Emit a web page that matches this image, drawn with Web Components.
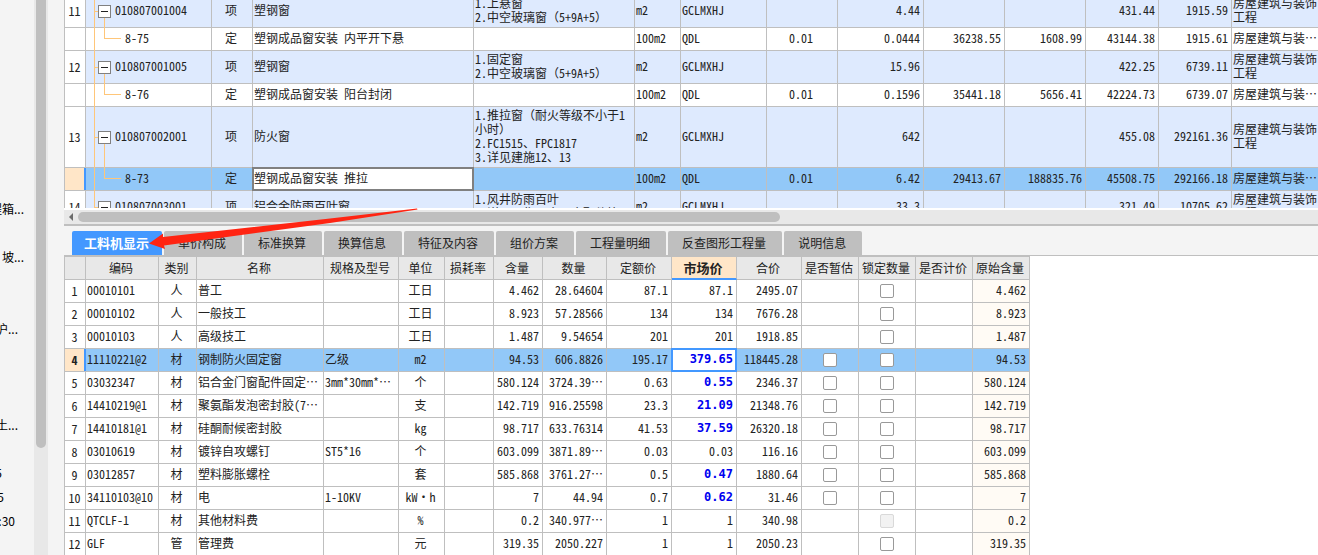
<!DOCTYPE html>
<html lang="zh-CN">
<head>
<meta charset="utf-8">
<title>工料机显示</title>
<style>
html, body { margin: 0; height: 100%; }
body { overflow: hidden; background: #fff; }
</style>
</head>
<body>
<budget-app></budget-app>
<script>
const define = (name, html) => customElements.define(name, class extends HTMLElement {
  constructor() {
    super();
    const t = document.createElement('template');
    t.innerHTML = html;
    this.attachShadow({ mode: 'open' }).append(t.content.cloneNode(true));
  }
});

const gridCss = `
:host { display: block; overflow: hidden; background: #fff; }
table { table-layout: fixed; width: 0; border-collapse: separate; border-spacing: 0; border-left: 1px solid #bfbfbf; }
th, td { box-sizing: border-box; height: 23px; padding: 0 0 2px 1px; border: 0 solid #bfbfbf; border-width: 0 1px 1px 0;
  font-weight: normal; white-space: nowrap; overflow: hidden; text-align: left; line-height: 14px; position: relative; }
.c { text-align: center; padding: 0 2px 2px 0; }
.r { text-align: right; padding: 0 3px 2px 0; }
.no { text-align: center; padding: 0 1px 0 0; background: #fff; }
.sel td { background: #92c8f8; }
.sel .no { background: #ffe6c8; font-weight: bold; }
.sel .no::after { content: ""; position: absolute; inset: 0 -1px 0 auto; width: 2px; background: #4398ff; }
.sel td.focus, .sel .no { overflow: visible; }
.sel td.focus { background: #fff; }
td.focus::after { content: ""; position: absolute; inset: -1px; border: 2px solid #808080; }
`;
const cols = w => '<colgroup>' + w.map(x => `<col style="width:${x}px">`).join('') + '</colgroup>';
const total = w => w.reduce((a, b) => a + b, 1);

/* upper grid: list items and their quota lines */
define('tree-node', `<style>
:host { display: block; position: relative; height: 100%; }
.in { display: flex; align-items: center; height: 100%; box-sizing: border-box; padding-left: 12px; gap: 4px; }
:host([child]) .in { padding-left: 39px; }
.label { padding-bottom: 2px; }
:host::before { content: ""; position: absolute; left: 8px; top: 0; bottom: -1px; width: 1px; background: #ffc679; }
:host([child]) .in::before { content: ""; position: absolute; left: 18px; top: 0; bottom: 50%; width: 16px; border: solid #ffc679; border-width: 0 0 1px 1px; }
:host(:not([child])) .in::before { content: ""; position: absolute; left: 18px; top: 50%; bottom: -1px; width: 1px; background: #ffc679; }
:host(:not([child])) .in::after { content: ""; position: absolute; left: 8px; top: 50%; height: 1px; width: 4px; background: #ffc679; }
button { position: relative; width: 13px; height: 13px; flex: none; padding: 0; border: 1px solid #808080; border-radius: 0; background: #fff; }
button::after { content: ""; position: absolute; left: 2px; right: 2px; top: 5px; height: 1px; background: #222; }
:host([child]) button { display: none; }
</style><div class="in"><button aria-label="折叠"></button><div class="label"><slot></slot></div></div>`);

const W1 = [21, 126, 41, 221, 161, 46, 86, 71, 86, 81, 81, 73, 73, 90];
const P2 = '房屋建筑与装饰<br>工程', P1 = '房屋建筑与装…';
const R1 = [
  [33, '11', '010807001004', '项', '塑钢窗', '1.上悬窗<br>2.中空玻璃窗（5+9A+5）', 'm2', 'GCLMXHJ', '', '4.44', '', '', '431.44', '1915.59', P2],
  [23, '', '8-75', '定', '塑钢成品窗安装 内平开下悬', '', '100m2', 'QDL', '0.01', '0.0444', '36238.55', '1608.99', '43144.38', '1915.61', P1],
  [33, '12', '010807001005', '项', '塑钢窗', '1.固定窗<br>2.中空玻璃窗（5+9A+5）', 'm2', 'GCLMXHJ', '', '15.96', '', '', '422.25', '6739.11', P2],
  [23, '', '8-76', '定', '塑钢成品窗安装 阳台封闭', '', '100m2', 'QDL', '0.01', '0.1596', '35441.18', '5656.41', '42224.73', '6739.07', P1],
  [61, '13', '010807002001', '项', '防火窗', '1.推拉窗（耐火等级不小于1<br>小时）<br>2.FC1515、FPC1817<br>3.详见建施12、13', 'm2', 'GCLMXHJ', '', '642', '', '', '455.08', '292161.36', P2],
  [23, '', '8-73', '定', '塑钢成品窗安装 推拉', '', '100m2', 'QDL', '0.01', '6.42', '29413.67', '188835.76', '45508.75', '292166.18', P1],
  [33, '14', '010807003001', '项', '铝合金防雨百叶窗', '1.风井防雨百叶<br>2.详见图集、含五金配件等', 'm2', 'GCLMXHJ', '', '33.3', '', '', '321.49', '10705.62', P2]
];
define('item-grid', `<style>${gridCss}
table { margin-top: -5px; }
.item td { background: #deeafe; }
.item .no { background: #fff; }
.tree { padding: 0; overflow: visible; }
</style><table style="width:${total(W1)}px">${cols(W1)}<tbody>${R1.map(([h, ...c]) => {
  const child = c[0] === '', sel = c[1] === '8-73';
  return `<tr class="${child ? '' : 'item'} ${sel ? 'sel' : ''}">` + c.map((t, i) => {
    const k = i === 0 ? 'no' : i === 1 ? 'tree' : i === 2 || i === 7 ? 'c' : i > 7 && i < 13 ? 'r' : sel && i === 3 ? 'focus' : '';
    const v = i === 1 ? `<tree-node ${child ? 'child' : ''} style="height:${h - 1}px">${t}</tree-node>` : t;
    return `<td class="${k}" style="height:${h}px">${v}</td>`;
  }).join('') + '</tr>';
}).join('')}</tbody></table>`);

/* lower grid: labour, material and machine lines */
const W2 = [21, 73, 38, 127, 75, 46, 49, 49, 64, 65, 65, 65, 57, 57, 57, 57];
const H2 = ['', '编码', '类别', '名称', '规格及型号', '单位', '损耗率', '含量', '数量', '定额价', '市场价', '合价', '是否暂估', '锁定数量', '是否计价', '原始含量'];
const R2 = [
  ['00010101', '人', '普工', '', '工日', '4.462', '28.64604', '87.1', '87.1', '2495.07', '', 'o', '4.462'],
  ['00010102', '人', '一般技工', '', '工日', '8.923', '57.28566', '134', '134', '7676.28', '', 'o', '8.923'],
  ['00010103', '人', '高级技工', '', '工日', '1.487', '9.54654', '201', '201', '1918.85', '', 'o', '1.487'],
  ['11110221@2', '材', '钢制防火固定窗', '乙级', 'm2', '94.53', '606.8826', '195.17', '*379.65', '118445.28', 'o', 'o', '94.53'],
  ['03032347', '材', '铝合金门窗配件固定…', '3mm*30mm*…', '个', '580.124', '3724.39…', '0.63', '*0.55', '2346.37', 'o', 'o', '580.124'],
  ['14410219@1', '材', '聚氨酯发泡密封胶(7…', '', '支', '142.719', '916.25598', '23.3', '*21.09', '21348.76', 'o', 'o', '142.719'],
  ['14410181@1', '材', '硅酮耐候密封胶', '', 'kg', '98.717', '633.76314', '41.53', '*37.59', '26320.18', 'o', 'o', '98.717'],
  ['03010619', '材', '镀锌自攻螺钉', 'ST5*16', '个', '603.099', '3871.89…', '0.03', '0.03', '116.16', 'o', 'o', '603.099'],
  ['03012857', '材', '塑料膨胀螺栓', '', '套', '585.868', '3761.27…', '0.5', '*0.47', '1880.64', 'o', 'o', '585.868'],
  ['34110103@10', '材', '电', '1-10KV', 'kW·h', '7', '44.94', '0.7', '*0.62', '31.46', 'o', 'o', '7'],
  ['QTCLF-1', '材', '其他材料费', '', '%', '0.2', '340.977…', '1', '1', '340.98', '', 'x', '0.2'],
  ['GLF', '管', '管理费', '', '元', '319.35', '2050.227', '1', '1', '2050.23', '', 'o', '319.35']
];
const box = (v, label) => v ? `<input type="checkbox" aria-label="${label}" ${v === 'x' ? 'disabled' : ''}>` : '';
define('resource-grid', `<style>${gridCss}
table { border-top: 1px solid #bfbfbf; }
th { background: #e8e8e8; text-align: center; padding: 0 2px 0 0; }
th.on { background: #ffe6c8; font-weight: bold; font-size: 13px; border-bottom: 2px solid #4398ff; }
.orig { background: #fffbf5; }
.price { color: #0000f0; font-weight: bold; font-family: "DejaVu Sans Mono", monospace; }
td.focus::after { border-color: #4398ff; }
.k { padding: 0; }
input { appearance: none; display: block; box-sizing: border-box; width: 14px; height: 14px; margin: 0 auto; border: 1px solid #999; border-radius: 2px; background: #fff; }
input:disabled { border-color: #d9d9d9; background: #f2f2f2; }
</style><table style="width:${total(W2)}px">${cols(W2)}<thead><tr>${H2.map((h, i) => `<th class="${i === 10 ? 'on' : ''}">${h}</th>`).join('')}</tr></thead>
<tbody>${R2.map((r, n) => {
  const sel = n === 3;
  const [code, kind, name, spec, unit, qty, amount, quota, price, sum, est, lock, orig] = r;
  const set = price[0] === '*';
  return `<tr class="${sel ? 'sel' : ''}"><td class="no">${n + 1}</td><td>${code}</td><td class="c">${kind}</td><td>${name}</td><td>${spec}</td>
<td class="c">${unit}</td><td></td><td class="r">${qty}</td><td class="r">${amount}</td><td class="r">${quota}</td>
<td class="r ${set ? 'price' : ''} ${sel ? 'focus' : ''}">${price.replace('*', '')}</td><td class="r">${sum}</td>
<td class="k">${box(est, '是否暂估')}</td><td class="k">${box(lock, '锁定数量')}</td><td></td><td class="r orig">${orig}</td></tr>`;
}).join('')}</tbody></table>`);

define('tab-item', `<style>
:host { display: block; }
button { display: block; height: 24px; padding: 0 16px 0 14px; border: 0; border-radius: 2px 2px 0 0; background: #bfbfbf; color: #222; font: inherit; line-height: 24px; white-space: nowrap; }
:host([active]) button { padding: 0 13px 0 12px; background: #4398ff; color: #fff; font-weight: bold; font-size: 13px; }
</style><button role="tab"><slot></slot></button>`);

define('tab-strip', `<style>
:host { display: flex; align-items: flex-end; gap: 2px; height: 29px; padding-left: 8px; background: #f4f4f4; border-bottom: 1px solid #bfbfbf; }
</style><slot></slot>`);

define('scroll-row', `<style>
:host { display: flex; align-items: center; height: 14px; padding-left: 5px; gap: 5px; background: #e8e8e8; border-top: 2px solid #fff; border-bottom: 2px solid #bfbfbf; }
svg { flex: none; }
i { width: calc(56% + 3px); height: 10px; border-radius: 5px; background: #bfbfbf; }
</style><svg width="4" height="8" viewBox="0 0 4 8"><path d="M4 0v8L0 4z" fill="#6b6b6b"/></svg><i></i>`);

define('side-panel', `<style>
:host { display: flex; background: #f4f4f4; overflow: hidden; color: #000; }
ul { flex: none; width: 34px; box-sizing: border-box; margin: 0; padding: 197px 10px 0 0; list-style: none; overflow: hidden; }
li { display: flex; justify-content: flex-end; height: 24px; line-height: 24px; white-space: nowrap; }
li.s { padding-right: 6px; }
li.n { padding-right: 20px; }
li.m { padding-right: 22px; }
li.t { padding-right: 9px; }
.bar { width: 14px; padding-left: 2px; box-sizing: border-box; background: #e8e8e8; }
.bar i { display: block; width: 10px; height: calc(100% - 107px); border-radius: 0 0 5px 5px; background: #bfbfbf; }
</style><ul><li>程箱...</li><li></li><li>坡...</li><li></li><li></li><li class="s">沪...</li><li></li><li></li><li></li><li class="s">土...</li><li></li><li class="m">5</li><li class="n">5</li><li class="t">:30</li></ul>
<div class="bar"><i></i></div>`);

define('callout-arrow', `<style>
:host { display: block; position: absolute; pointer-events: none; }
svg { display: block; }
</style><svg width="270" height="44" viewBox="148 207 270 44"><path d="M149 243.500L163 233.500V237L330 218.500L417 208.500L417.500 209.500L330 223L164 245.500L165 249z" fill="#ff2412"/></svg>`);

define('budget-app', `<style>
:host { display: flex; gap: 16px; height: 100vh; overflow: hidden; background: #f4f4f4; color: #222;
  font: 12px/14px "Noto Sans Mono CJK SC", "Noto Sans CJK SC", "Liberation Mono", monospace; }
side-panel { flex: none; width: 48px; font-family: "Noto Sans CJK SC", sans-serif; }
main { flex: 1; min-width: 0; display: flex; flex-direction: column; }
item-grid { flex: none; height: 208px; }
scroll-row, tab-strip { flex: none; }
.lower { position: relative; flex: none; }
callout-arrow { left: 84px; top: -19px; }
resource-grid { flex: 1; min-height: 0; }
</style>
<side-panel></side-panel>
<main>
<item-grid></item-grid>
<scroll-row></scroll-row>
<div class="lower"><tab-strip role="tablist">
<tab-item active>工料机显示</tab-item><tab-item>单价构成</tab-item><tab-item>标准换算</tab-item><tab-item>换算信息</tab-item><tab-item>特征及内容</tab-item><tab-item>组价方案</tab-item><tab-item>工程量明细</tab-item><tab-item>反查图形工程量</tab-item><tab-item>说明信息</tab-item>
</tab-strip><callout-arrow></callout-arrow></div>
<resource-grid></resource-grid>
</main>`);
</script>
</body>
</html>
